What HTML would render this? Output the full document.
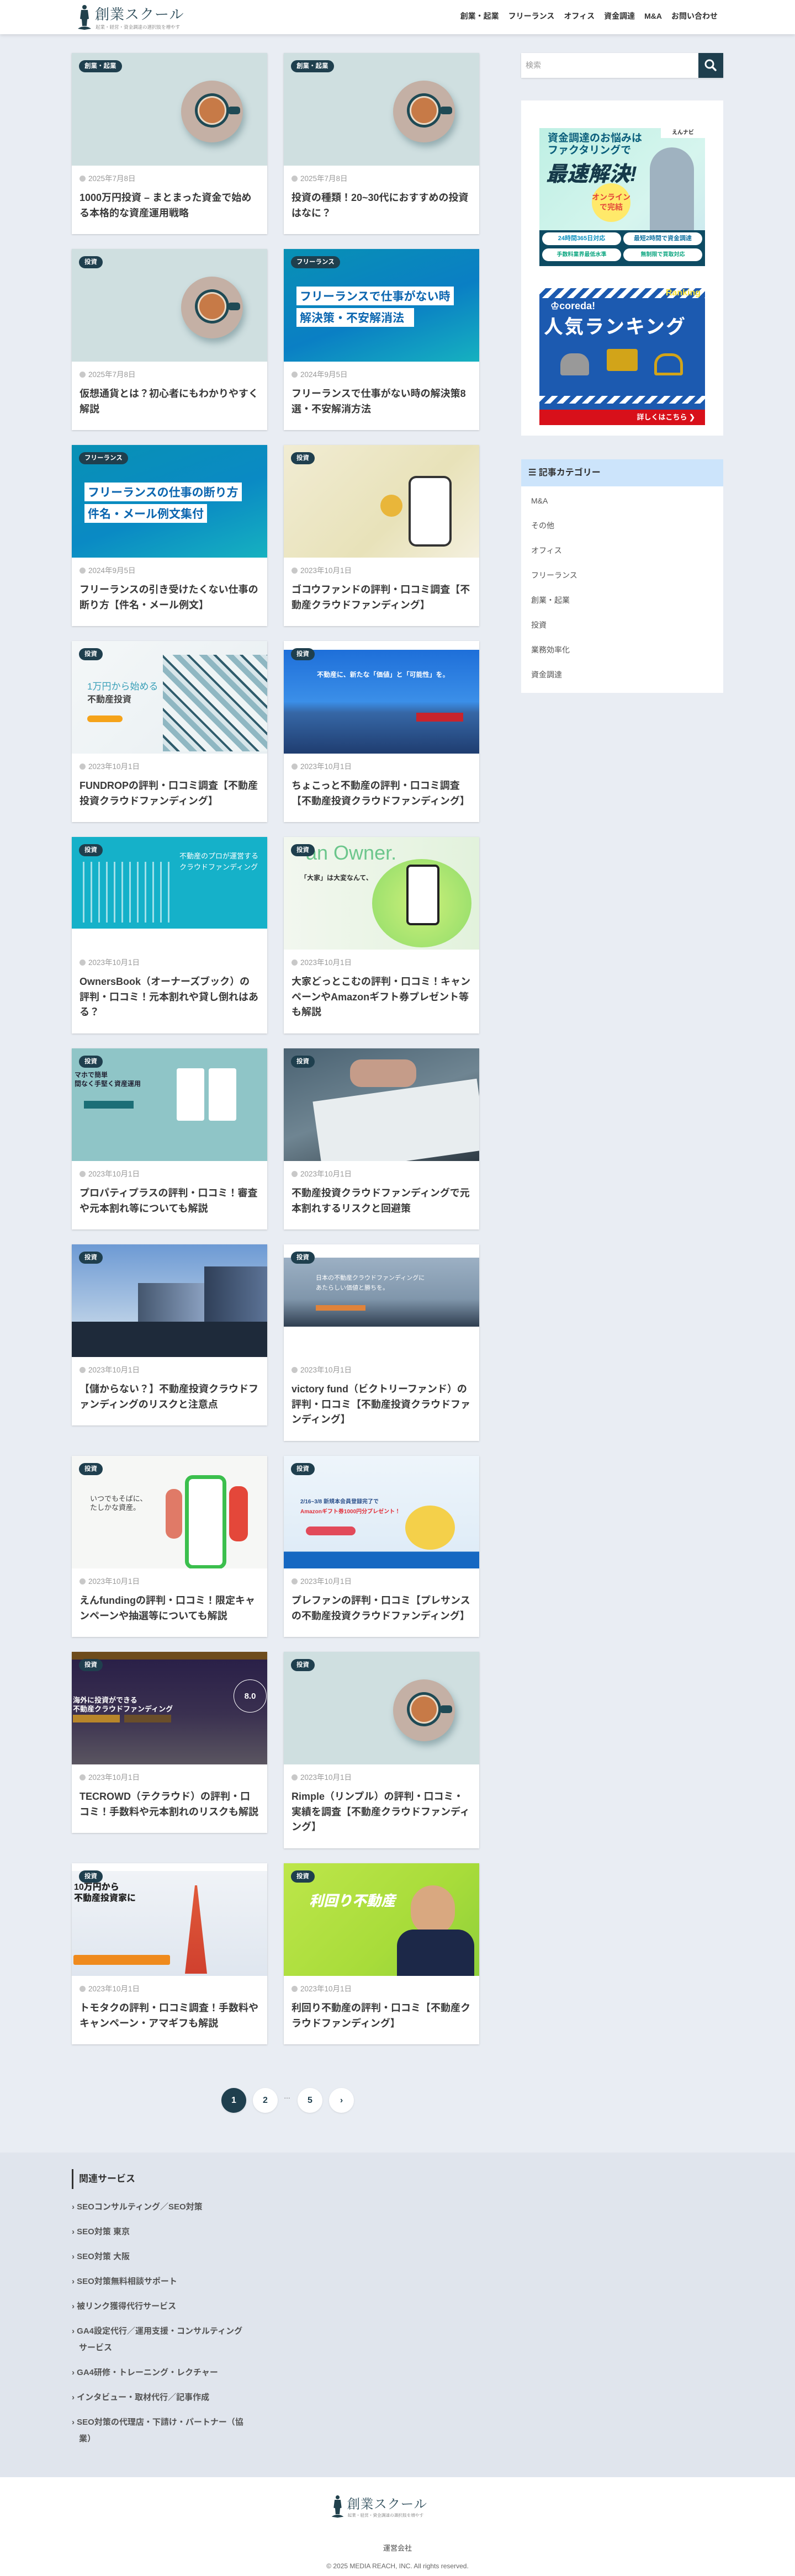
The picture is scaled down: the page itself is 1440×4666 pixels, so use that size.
<!DOCTYPE html>
<html lang="ja"><head><meta charset="utf-8">
<style>
*{box-sizing:border-box;margin:0;padding:0}
body{width:1440px;height:4666px;background:#e9edf3;font-family:"Liberation Sans","Noto Sans CJK JP",sans-serif;color:#333;position:relative;overflow:hidden}
header{position:absolute;top:0;left:0;width:1440px;height:62px;background:#fff;box-shadow:0 2px 6px rgba(0,0,0,.12);z-index:2}
.logo{position:absolute;left:138px;top:8px;width:200px;height:48px}
.logo .t{position:absolute;left:34px;top:0;font-size:26px;color:#2d4c5a;font-family:"Noto Serif CJK SC","Liberation Serif",serif;letter-spacing:1px;line-height:34px;white-space:nowrap}
.logo .s{position:absolute;left:35px;top:35px;font-size:8.5px;color:#777;white-space:nowrap;font-family:"Noto Serif CJK SC",serif}
nav{position:absolute;right:140px;top:19px;font-size:14px;font-weight:bold;color:#333}
nav span{margin-left:17px}
.card{position:absolute;width:354px;background:#fff;box-shadow:0 1px 3px rgba(0,0,0,.18)}
.img{height:204px;position:relative;overflow:hidden}
.tag{position:absolute;left:13px;top:13px;height:22px;line-height:22px;padding:0 10px;background:#1f3f4e;color:#fff;font-size:11.5px;font-weight:bold;border-radius:11px;z-index:1}
.body{padding:14px 14px 24px}
.date{font-size:13.5px;color:#999;line-height:20px;height:20px}
.date:before{content:"";display:inline-block;width:11px;height:11px;border-radius:50%;background:#c8c8c8;margin-right:5px;vertical-align:-1px}
.title{margin-top:11px;font-size:18px;font-weight:bold;line-height:27.5px;color:#3a3a3a}
.coffee{background:#cfdfe0}
.coffee .sau{position:absolute;left:198px;top:50px;width:112px;height:112px;border-radius:50%;background:#c4b0a5;box-shadow:4px 8px 12px rgba(40,80,90,.35)}
.coffee .cup{position:absolute;left:223px;top:73px;width:62px;height:62px;border-radius:50%;background:#1f4a55}
.coffee .cup:after{content:"";position:absolute;left:5px;top:5px;width:52px;height:52px;border-radius:50%;background:#c77a47;box-shadow:inset 0 0 0 3px #e9d9c6}
.coffee .h{position:absolute;left:283px;top:97px;width:22px;height:14px;border-radius:5px;background:#1f4a55}
.side{position:absolute;left:944px;width:366px;background:#fff}
.pg{position:absolute;top:3782px;width:45px;height:45px;border-radius:50%;background:#fff;text-align:center;line-height:45px;font-size:16px;font-weight:bold;color:#1f3f4e;box-shadow:0 1px 3px rgba(0,0,0,.1)}
.foot{position:absolute;top:3899px;left:0;width:1440px;height:588px;background:#e0e5ed}
.foot h3{position:absolute;left:130px;top:30px;border-left:3px solid #333;padding-left:10px;font-size:17px;line-height:36px;color:#333}
.foot ul{position:absolute;left:130px;top:84px;width:320px;list-style:none;font-size:15px;font-weight:bold;color:#555;line-height:30px}
.foot li{margin-bottom:15px;padding-left:13px;text-indent:-13px}
.foot li:before{content:"› ";font-weight:bold}
</style></head><body>
<header>
 <div class="logo">
  <svg style="position:absolute;left:0;top:0" width="30" height="48" viewBox="0 0 30 48"><circle cx="15" cy="5" r="4" fill="#21414c"/><path d="M9 10h12l2 16-3 1-1 12h-8l-1-12-3-1z" fill="#21414c"/><path d="M3 44c4-3 8-4 12-4s8 1 12 4l-12 2z" fill="#21414c"/></svg>
  <div class="t">創業スクール</div>
  <div class="s">起業・経営・資金調達の選択肢を増やす</div>
 </div>
 <nav><span>創業・起業</span><span>フリーランス</span><span>オフィス</span><span>資金調達</span><span>M&amp;A</span><span>お問い合わせ</span></nav>
</header>

<div class="side" style="top:96px;height:45px;box-shadow:0 1px 3px rgba(0,0,0,.15)">
 <div style="position:absolute;left:8px;top:12px;font-size:14px;color:#999">検索</div>
 <div style="position:absolute;right:0;top:0;width:45px;height:45px;background:#1f3f4e"><svg width="45" height="45" viewBox="0 0 45 45"><circle cx="20" cy="20" r="7" stroke="#fff" stroke-width="3" fill="none"/><path d="M25 25l6 6" stroke="#fff" stroke-width="3.5" stroke-linecap="round"/></svg></div>
</div>
<div class="side" style="top:182px;height:607px">
 <div style="position:absolute;left:33px;top:50px;width:300px;height:250px;background:linear-gradient(135deg,#bff0e4,#d6f5ee 60%,#c9e6ef);overflow:hidden">
  <div style="position:absolute;left:15px;top:8px;font-size:19px;font-weight:bold;color:#0b5f7c;line-height:22px">資金調達のお悩みは<br>ファクタリングで</div>
  <div style="position:absolute;left:12px;top:52px;font-size:38px;font-weight:900;font-style:italic;color:#163a4a">最速解決!</div>
  <div style="position:absolute;right:0;top:0;width:80px;height:18px;background:#fff;font-size:10px;font-weight:bold;text-align:center;line-height:18px">えんナビ</div>
  <div style="position:absolute;left:95px;width:70px;height:70px;border-radius:50%;background:#ffe96a;top:100px;font-size:14px;font-weight:bold;color:#e4473a;text-align:center;padding-top:16px;line-height:18px">オンライン<br>で完結</div>
  <div style="position:absolute;left:200px;top:35px;width:80px;height:155px;border-radius:40px 40px 0 0;background:#9fb2c0"></div>
  <div style="position:absolute;left:0;top:185px;width:300px;height:65px;background:#0d4b63"></div>
  <div style="position:absolute;left:5px;top:189px;width:143px;height:23px;border-radius:12px;background:#fff;font-size:11px;font-weight:bold;color:#0a8fbf;text-align:center;line-height:23px">24時間365日対応</div>
  <div style="position:absolute;left:152px;top:189px;width:143px;height:23px;border-radius:12px;background:#fff;font-size:11px;font-weight:bold;color:#0a6f9f;text-align:center;line-height:23px">最短2時間で資金調達</div>
  <div style="position:absolute;left:5px;top:218px;width:143px;height:23px;border-radius:12px;background:#fff;font-size:10px;font-weight:bold;color:#0aa57f;text-align:center;line-height:23px">手数料業界最低水準</div>
  <div style="position:absolute;left:152px;top:218px;width:143px;height:23px;border-radius:12px;background:#fff;font-size:10px;font-weight:bold;color:#0aa57f;text-align:center;line-height:23px">無制限で買取対応</div>
 </div>
 <div style="position:absolute;left:33px;top:340px;width:300px;height:248px;background:#1c5ab0;overflow:hidden">
  <div style="position:absolute;left:0;top:0;width:300px;height:18px;background:repeating-linear-gradient(135deg,#fff 0 8px,#1c5ab0 8px 16px)"></div>
  <div style="position:absolute;right:8px;top:0;font-size:16px;font-weight:bold;color:#f8e23a">Ranking</div>
  <div style="position:absolute;left:20px;top:22px;font-size:18px;font-weight:bold;color:#fff">♔coreda!</div>
  <div style="position:absolute;left:8px;top:42px;font-size:35px;font-weight:bold;color:#fff;letter-spacing:2px">人気ランキング</div>
  <div style="position:absolute;left:38px;top:118px;width:52px;height:40px;background:#999;border-radius:20px 20px 4px 4px"></div>
  <div style="position:absolute;left:122px;top:110px;width:56px;height:40px;background:#d2a419;border-radius:4px"></div>
  <div style="position:absolute;left:208px;top:118px;width:52px;height:40px;border:5px solid #d2a419;border-radius:20px 20px 4px 4px"></div>
  <div style="position:absolute;left:0;top:195px;width:300px;height:14px;background:repeating-linear-gradient(135deg,#fff 0 8px,#1c5ab0 8px 16px)"></div>
  <div style="position:absolute;left:0;top:220px;width:300px;height:28px;background:#d8101a;color:#fff;font-size:13px;font-weight:bold;text-align:right;padding-right:18px;line-height:28px">詳しくはこちら ❯</div>
 </div>
</div>
<div class="side" style="top:832px;height:423px">
 <div style="height:49px;background:#cce4fb;font-size:16px;font-weight:bold;line-height:49px;padding-left:13px;color:#333">☰ 記事カテゴリー</div>
 <div style="padding:16px 0 0 18px;font-size:14px;color:#555;line-height:21px">
  <div style="height:45px">M&amp;A</div><div style="height:45px">その他</div><div style="height:45px">オフィス</div><div style="height:45px">フリーランス</div><div style="height:45px">創業・起業</div><div style="height:45px">投資</div><div style="height:45px">業務効率化</div><div style="height:45px">資金調達</div>
 </div>
</div>

<div class="card" style="left:130px;top:96px"><div class="img coffee"><span class="tag">創業・起業</span><div class="sau"></div><div class="cup"></div><div class="h"></div></div><div class="body"><div class="date">2025年7月8日</div><div class="title">1000万円投資 – まとまった資金で始める本格的な資産運用戦略</div></div></div>
<div class="card" style="left:514px;top:96px"><div class="img coffee"><span class="tag">創業・起業</span><div class="sau"></div><div class="cup"></div><div class="h"></div></div><div class="body"><div class="date">2025年7月8日</div><div class="title">投資の種類！20~30代におすすめの投資はなに？</div></div></div>

<div class="card" style="left:130px;top:451px"><div class="img coffee"><span class="tag">投資</span><div class="sau"></div><div class="cup"></div><div class="h"></div></div><div class="body"><div class="date">2025年7月8日</div><div class="title">仮想通貨とは？初心者にもわかりやすく解説</div></div></div>
<div class="card" style="left:514px;top:451px"><div class="img" style="background:linear-gradient(160deg,#0891b5,#0a7fc4 55%,#16b1c0)"><span class="tag">フリーランス</span><div style="position:absolute;left:23px;top:68px;background:#fff;color:#0d67b0;font-size:21px;font-weight:bold;padding:2px 6px">フリーランスで仕事がない時</div><div style="position:absolute;left:23px;top:107px;background:#fff;color:#0d67b0;font-size:21px;font-weight:bold;padding:2px 6px">解決策・不安解消法&nbsp;&nbsp;</div></div><div class="body"><div class="date">2024年9月5日</div><div class="title">フリーランスで仕事がない時の解決策8選・不安解消方法</div></div></div>

<div class="card" style="left:130px;top:806px"><div class="img" style="background:linear-gradient(160deg,#0891b5,#0a8ac4 55%,#16b1c0)"><span class="tag">フリーランス</span><div style="position:absolute;left:23px;top:68px;background:#fff;color:#0d67b0;font-size:21px;font-weight:bold;padding:2px 6px">フリーランスの仕事の断り方</div><div style="position:absolute;left:23px;top:107px;background:#fff;color:#0d67b0;font-size:21px;font-weight:bold;padding:2px 6px">件名・メール例文集付</div></div><div class="body"><div class="date">2024年9月5日</div><div class="title">フリーランスの引き受けたくない仕事の断り方【件名・メール例文】</div></div></div>
<div class="card" style="left:514px;top:806px"><div class="img" style="background:linear-gradient(135deg,#f1ecd3,#e8e2b9 60%,#f4f0de)"><span class="tag">投資</span><div style="position:absolute;left:230px;top:60px;width:70px;height:120px;border-radius:10px;background:#fff;box-shadow:0 0 0 4px #333"></div><div style="position:absolute;left:175px;top:90px;width:40px;height:40px;border-radius:50%;background:#e9b63a"></div></div><div class="body"><div class="date">2023年10月1日</div><div class="title">ゴコウファンドの評判・口コミ調査【不動産クラウドファンディング】</div></div></div>

<div class="card" style="left:130px;top:1161px"><div class="img" style="background:linear-gradient(135deg,#f4f7f8,#e8eff2)"><span class="tag">投資</span><div style="position:absolute;left:28px;top:68px;font-size:17px;color:#3aa0b8">1万円から始める</div><div style="position:absolute;left:28px;top:92px;font-size:16px;font-weight:bold;color:#444">不動産投資</div><div style="position:absolute;left:28px;top:135px;width:64px;height:12px;border-radius:6px;background:#f5a31a"></div><div style="position:absolute;left:165px;top:25px;width:190px;height:175px;background:repeating-linear-gradient(45deg,#8fb7c2 0 10px,#d8e6ea 10px 18px,#2f5c6c 18px 22px,#eef4f5 22px 34px)"></div></div><div class="body"><div class="date">2023年10月1日</div><div class="title">FUNDROPの評判・口コミ調査【不動産投資クラウドファンディング】</div></div></div>
<div class="card" style="left:514px;top:1161px"><div class="img" style="background:linear-gradient(180deg,#fff 0 16px,#1e6fd9 16px,#3b8fe8 110px,#3667a6 130px,#1f3d70)"><span class="tag">投資</span><div style="position:absolute;left:60px;top:52px;font-size:12px;font-weight:bold;color:#fff">不動産に、新たな「価値」と「可能性」を。</div><div style="position:absolute;left:240px;top:130px;width:85px;height:16px;background:#c8242c"></div></div><div class="body"><div class="date">2023年10月1日</div><div class="title">ちょこっと不動産の評判・口コミ調査【不動産投資クラウドファンディング】</div></div></div>

<div class="card" style="left:130px;top:1516px"><div class="img" style="background:#fff"><div style="height:166px;background:#15b1c9"></div><span class="tag">投資</span><div style="position:absolute;left:195px;top:25px;font-size:13px;color:#fff;line-height:20px">不動産のプロが運営する<br>クラウドファンディング</div><div style="position:absolute;left:20px;top:45px;width:160px;height:110px;background:repeating-linear-gradient(90deg,rgba(255,255,255,.6) 0 3px,transparent 3px 14px)"></div></div><div class="body"><div class="date">2023年10月1日</div><div class="title">OwnersBook（オーナーズブック）の評判・口コミ！元本割れや貸し倒れはある？</div></div></div>
<div class="card" style="left:514px;top:1516px"><div class="img" style="background:linear-gradient(90deg,#f2f7ef,#e2f2dc)"><span class="tag">投資</span><div style="position:absolute;left:40px;top:8px;font-size:36px;color:#6cc68c">an Owner.</div><div style="position:absolute;left:160px;top:40px;width:180px;height:160px;border-radius:50%;background:radial-gradient(circle,#cdf07a,#8fdc6a)"></div><div style="position:absolute;left:222px;top:50px;width:60px;height:110px;border-radius:8px;background:#222;box-shadow:inset 0 0 0 4px #222,inset 0 0 0 40px #fff"></div><div style="position:absolute;left:30px;top:65px;font-size:12px;font-weight:bold;color:#333">「大家」は大変なんて、</div></div><div class="body"><div class="date">2023年10月1日</div><div class="title">大家どっとこむの評判・口コミ！キャンペーンやAmazonギフト券プレゼント等も解説</div></div></div>

<div class="card" style="left:130px;top:1899px"><div class="img" style="background:#8fc5c7"><span class="tag">投資</span><div style="position:absolute;left:5px;top:40px;font-size:12px;font-weight:bold;color:#223;line-height:16px">マホで簡単<br>間なく手堅く資産運用</div><div style="position:absolute;left:190px;top:36px;width:50px;height:95px;background:#fff;border-radius:4px"></div><div style="position:absolute;left:248px;top:36px;width:50px;height:95px;background:#fff;border-radius:4px"></div><div style="position:absolute;left:22px;top:95px;width:90px;height:14px;background:#1b6e76"></div></div><div class="body"><div class="date">2023年10月1日</div><div class="title">プロパティプラスの評判・口コミ！審査や元本割れ等についても解説</div></div></div>
<div class="card" style="left:514px;top:1899px"><div class="img" style="background:linear-gradient(160deg,#4a6272,#6f8592 50%,#2f3b44)"><span class="tag">投資</span><div style="position:absolute;left:60px;top:75px;width:300px;height:130px;background:#e8edef;transform:rotate(-8deg)"></div><div style="position:absolute;left:120px;top:20px;width:120px;height:50px;border-radius:20px;background:#c59c89"></div></div><div class="body"><div class="date">2023年10月1日</div><div class="title">不動産投資クラウドファンディングで元本割れするリスクと回避策</div></div></div>

<div class="card" style="left:130px;top:2254px"><div class="img" style="background:linear-gradient(180deg,#6d9ad4,#b9cfe6 70%)"><span class="tag">投資</span><div style="position:absolute;left:120px;top:70px;width:120px;height:134px;background:linear-gradient(90deg,#44566e,#8aa0c0)"></div><div style="position:absolute;left:240px;top:40px;width:114px;height:164px;background:linear-gradient(90deg,#2f3f58,#5c7396)"></div><div style="position:absolute;left:0;top:140px;width:354px;height:64px;background:#1e2a3a"></div></div><div class="body"><div class="date">2023年10月1日</div><div class="title">【儲からない？】不動産投資クラウドファンディングのリスクと注意点</div></div></div>
<div class="card" style="left:514px;top:2254px"><div class="img" style="background:#fff"><div style="position:absolute;top:24px;left:0;width:354px;height:125px;background:linear-gradient(180deg,#9cb0c4,#8096ab 60%,#2f3e50)"></div><span class="tag">投資</span><div style="position:absolute;left:58px;top:52px;font-size:11px;color:#fff;line-height:18px">日本の不動産クラウドファンディングに<br>あたらしい価値と勝ちを。</div><div style="position:absolute;left:58px;top:110px;width:90px;height:10px;background:#e0833a"></div></div><div class="body"><div class="date">2023年10月1日</div><div class="title">victory fund（ビクトリーファンド）の評判・口コミ【不動産投資クラウドファンディング】</div></div></div>

<div class="card" style="left:130px;top:2637px"><div class="img" style="background:#f6f7f5"><span class="tag">投資</span><div style="position:absolute;left:33px;top:70px;font-size:13px;color:#444;line-height:16px">いつでもそばに、<br>たしかな資産。</div><div style="position:absolute;left:205px;top:35px;width:75px;height:170px;border:7px solid #3bbf4d;border-radius:14px;background:#fff"></div><div style="position:absolute;left:170px;top:60px;width:30px;height:90px;border-radius:14px;background:#e07a67"></div><div style="position:absolute;left:285px;top:55px;width:34px;height:100px;border-radius:14px;background:#e4473a"></div></div><div class="body"><div class="date">2023年10月1日</div><div class="title">えんfundingの評判・口コミ！限定キャンペーンや抽選等についても解説</div></div></div>
<div class="card" style="left:514px;top:2637px"><div class="img" style="background:linear-gradient(180deg,#eef5fb,#dfecf7 85%,#1668c2 85%)"><span class="tag">投資</span><div style="position:absolute;left:30px;top:74px;font-size:10px;font-weight:bold;color:#2a4f8a">2/16~3/8 新規本会員登録完了で</div><div style="position:absolute;left:30px;top:92px;font-size:10px;font-weight:bold;color:#e2313b">Amazonギフト券1000円分プレゼント！</div><div style="position:absolute;left:40px;top:128px;width:90px;height:16px;border-radius:8px;background:#e24a5a"></div><div style="position:absolute;left:220px;top:90px;width:90px;height:80px;border-radius:50%;background:#f4d04a"></div></div><div class="body"><div class="date">2023年10月1日</div><div class="title">プレファンの評判・口コミ【プレサンスの不動産投資クラウドファンディング】</div></div></div>

<div class="card" style="left:130px;top:2992px"><div class="img" style="background:linear-gradient(180deg,#6e4c1c 0 14px,#2a2048 14px,#3a3050 55%,#5a5560)"><span class="tag">投資</span><div style="position:absolute;left:2px;top:80px;font-size:13px;font-weight:bold;color:#fff;line-height:16px">海外に投資ができる<br>不動産クラウドファンディング</div><div style="position:absolute;left:2px;top:114px;width:85px;height:14px;background:#b8862a"></div><div style="position:absolute;left:95px;top:114px;width:85px;height:14px;background:#6a4e2a"></div><div style="position:absolute;left:293px;top:50px;width:60px;height:60px;border:1px solid #fff;border-radius:50%;color:#fff;font-size:15px;font-weight:bold;text-align:center;line-height:60px">8.0</div></div><div class="body"><div class="date">2023年10月1日</div><div class="title">TECROWD（テクラウド）の評判・口コミ！手数料や元本割れのリスクも解説</div></div></div>
<div class="card" style="left:514px;top:2992px"><div class="img coffee"><span class="tag">投資</span><div class="sau"></div><div class="cup"></div><div class="h"></div></div><div class="body"><div class="date">2023年10月1日</div><div class="title">Rimple（リンプル）の評判・口コミ・実績を調査【不動産クラウドファンディング】</div></div></div>

<div class="card" style="left:130px;top:3375px"><div class="img" style="background:linear-gradient(180deg,#fff 0 14px,#f0f3f7 14px,#dfe6ef)"><span class="tag">投資</span><div style="position:absolute;left:4px;top:34px;font-size:16px;font-weight:900;color:#222;line-height:20px">10万円から<br>不動産投資家に</div><div style="position:absolute;left:205px;top:40px;width:40px;height:160px;background:linear-gradient(180deg,#e05a3a,#d0402e);clip-path:polygon(45% 0,55% 0,100% 100%,0 100%)"></div><div style="position:absolute;left:3px;top:166px;width:175px;height:18px;border-radius:3px;background:#ef8a1d"></div></div><div class="body"><div class="date">2023年10月1日</div><div class="title">トモタクの評判・口コミ調査！手数料やキャンペーン・アマギフも解説</div></div></div>
<div class="card" style="left:514px;top:3375px"><div class="img" style="background:linear-gradient(135deg,#bde64a,#a8dc3a 60%,#8fd03a)"><span class="tag">投資</span><div style="position:absolute;left:46px;top:48px;font-size:26px;font-weight:900;font-style:italic;color:#fff">利回り不動産</div><div style="position:absolute;left:230px;top:40px;width:80px;height:90px;border-radius:40px;background:#d9a880"></div><div style="position:absolute;left:205px;top:120px;width:140px;height:84px;border-radius:30px 30px 0 0;background:#1c2848"></div></div><div class="body"><div class="date">2023年10月1日</div><div class="title">利回り不動産の評判・口コミ【不動産クラウドファンディング】</div></div></div>

<div class="pg" style="left:401px;background:#1f3f4e;color:#fff">1</div>
<div class="pg" style="left:458px">2</div>
<div style="position:absolute;left:514px;top:3790px;font-size:12px;color:#555">…</div>
<div class="pg" style="left:539px">5</div>
<div class="pg" style="left:596px">›</div>

<div class="foot">
 <h3>関連サービス</h3>
 <ul>
  <li>SEOコンサルティング／SEO対策</li><li>SEO対策 東京</li><li>SEO対策 大阪</li><li>SEO対策無料相談サポート</li><li>被リンク獲得代行サービス</li><li>GA4設定代行／運用支援・コンサルティングサービス</li><li>GA4研修・トレーニング・レクチャー</li><li>インタビュー・取材代行／記事作成</li><li>SEO対策の代理店・下請け・パートナー（協業）</li>
 </ul>
</div>
<div style="position:absolute;top:4487px;left:0;width:1440px;height:179px;background:#fff">
 <div class="logo" style="left:598px;top:32px;transform:scale(.9);transform-origin:0 0">
  <svg style="position:absolute;left:0;top:0" width="30" height="48" viewBox="0 0 30 48"><circle cx="15" cy="5" r="4" fill="#21414c"/><path d="M9 10h12l2 16-3 1-1 12h-8l-1-12-3-1z" fill="#21414c"/><path d="M3 44c4-3 8-4 12-4s8 1 12 4l-12 2z" fill="#21414c"/></svg>
  <div class="t">創業スクール</div>
  <div class="s">起業・経営・資金調達の選択肢を増やす</div>
 </div>
 <div style="position:absolute;left:0;width:1440px;top:118px;text-align:center;font-size:13px;color:#444">運営会社</div>
 <div style="position:absolute;left:0;width:1440px;top:154px;text-align:center;font-size:12px;color:#666">© 2025 MEDIA REACH, INC. All rights reserved.</div>
</div>
</body></html>
